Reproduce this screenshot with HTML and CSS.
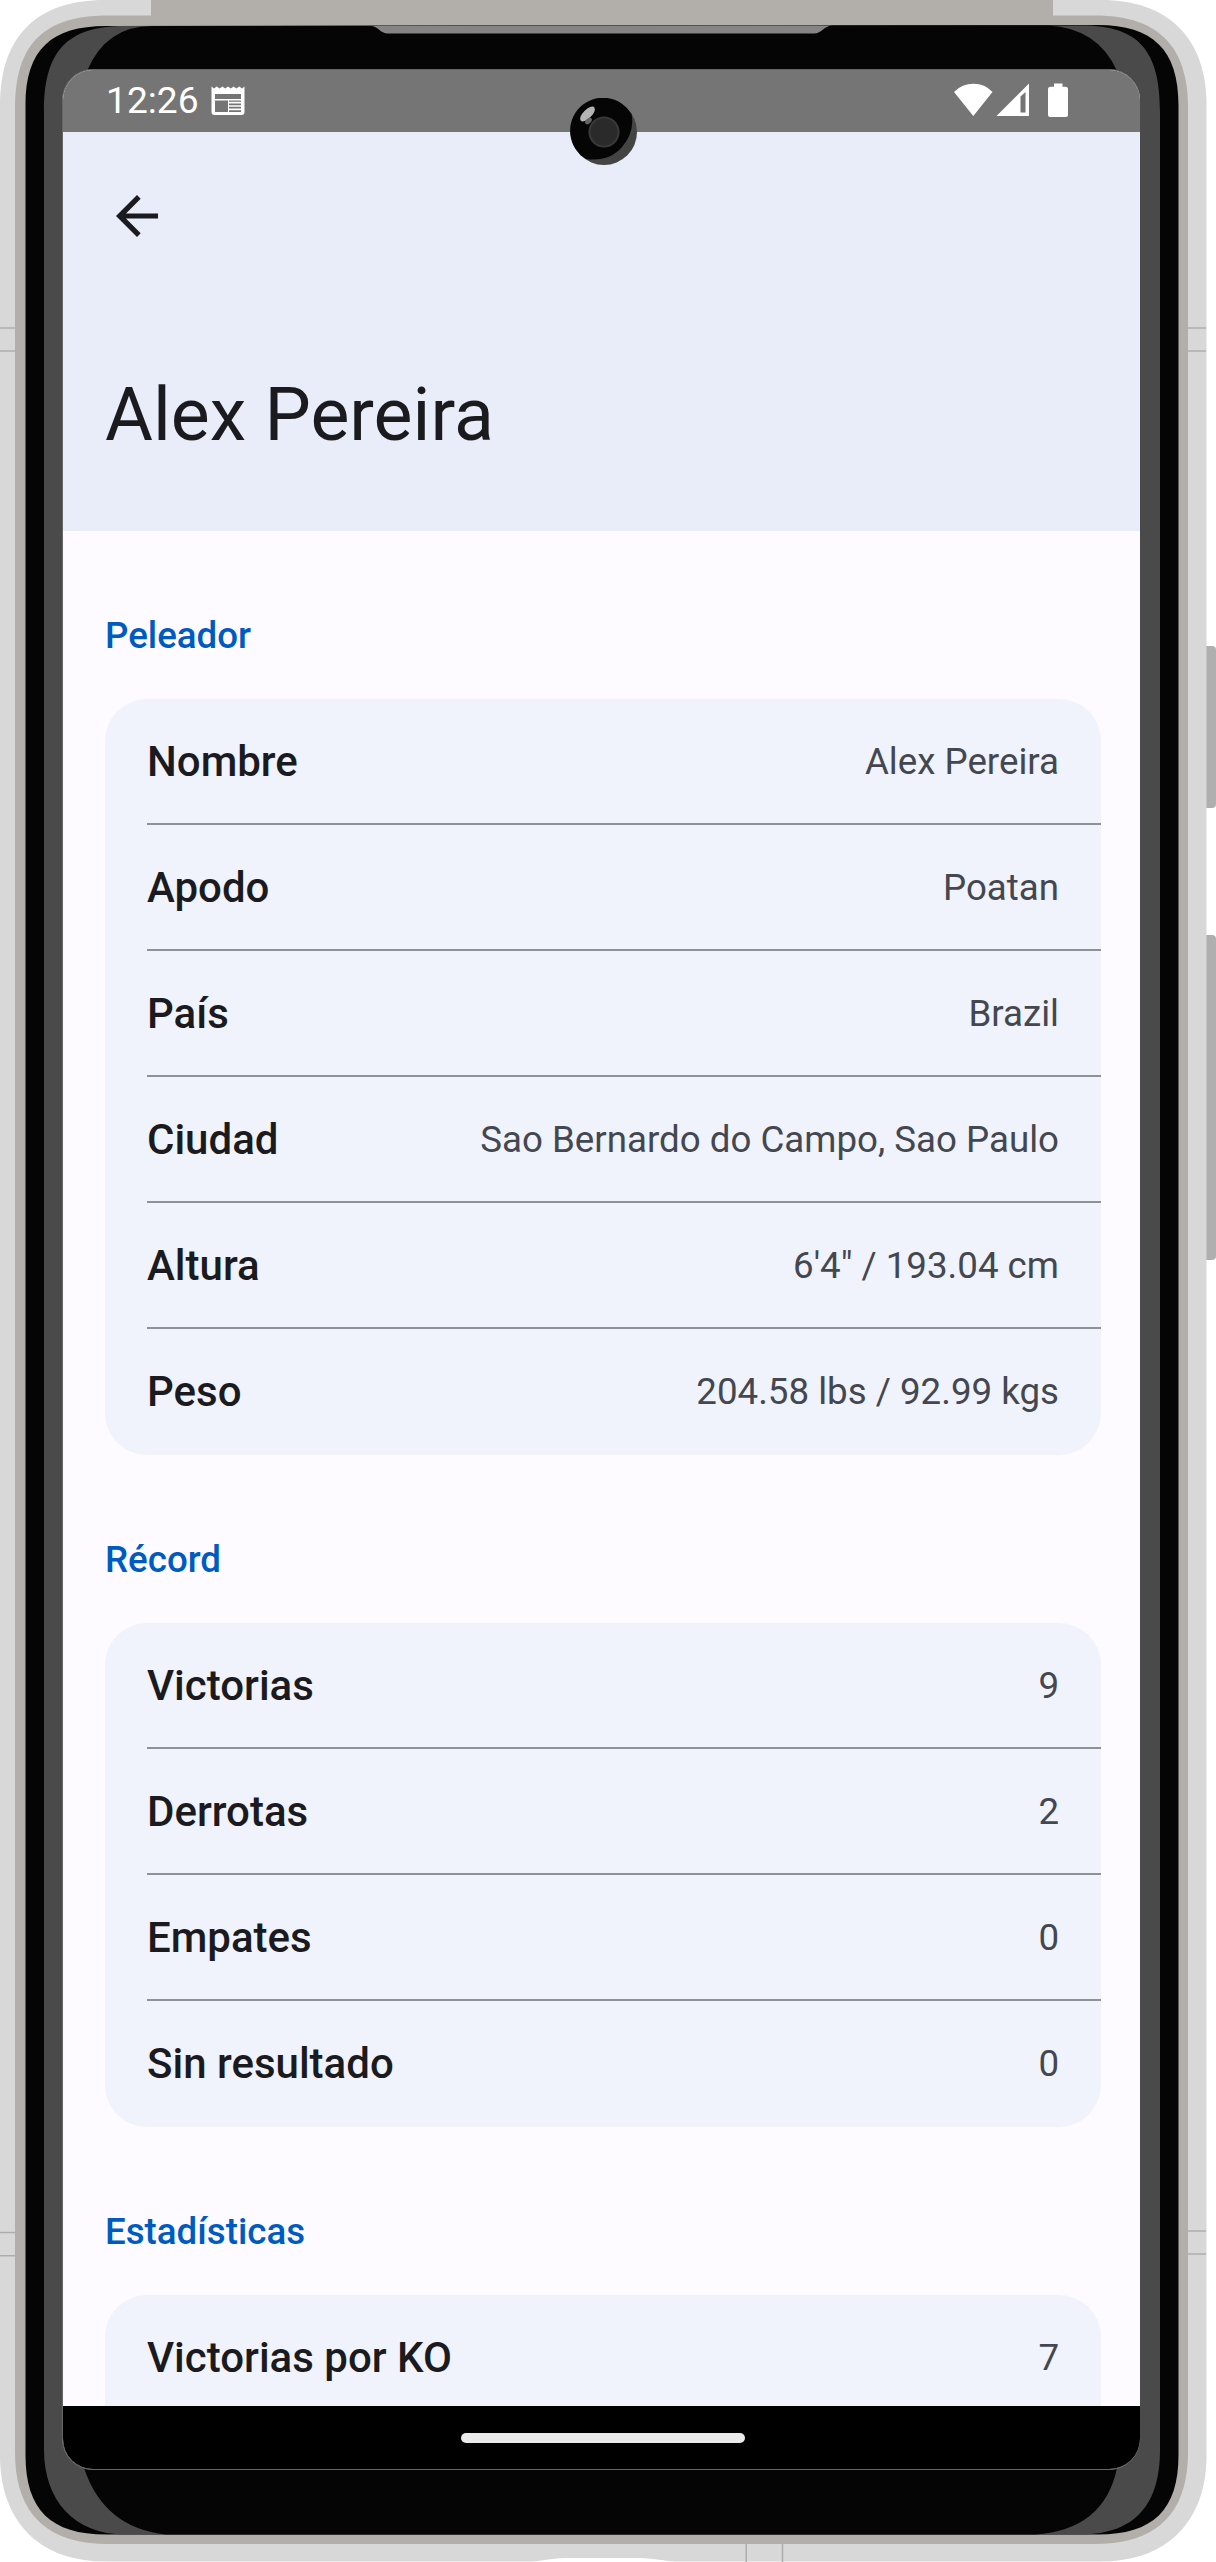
FILE: index.html
```html
<!DOCTYPE html>
<html lang="es">
<head>
<meta charset="utf-8">
<title>Alex Pereira</title>
<link rel="stylesheet" href="styles.css">
</head>
<body>
<div class="device">
  <svg class="frame" width="1216" height="2562" viewBox="0 0 1216 2562" aria-hidden="true">
    <path fill="#afafaf" d="M1200 646h12q4 0 4 4v154q0 4-4 4h-12zM1200 935h12q4 0 4 4v317q0 4-4 4h-12z"/>
    <path fill="#d8d8d8" d="M0 105C0 35 38 0 105 0H1101C1168 0 1206.500 38 1206.500 105V2456C1206.500 2520 1168 2561.500 1101 2561.500H105C38 2561.500 0 2520 0 2456Z"/>
    <path fill="#b2afaa" d="M151 0H1053V25H151Z"/>
    <path fill="#b2afaa" d="M15 108C15 48 40 15.500 108 15.500H1095C1160 15.500 1188 48 1188 108V2452C1188 2515 1155 2544 1095 2544H108C48 2544 15 2515 15 2452Z"/>
    <path fill="#050505" d="M25.500 105C25.500 50 51 26 106 26L1098 25C1153 25 1178.500 50 1178.500 105V2455C1178.500 2510 1153 2534.500 1098 2534.500H106C51 2534.500 25.500 2510 25.500 2455Z"/>
    <path fill="#4a4a4a" d="M44 112C44 52 66 26 125 26L1082 25.500C1140 25.500 1160 52 1160 112V2450C1160 2510 1130 2534.500 1080 2534.500H125C74 2534.500 44 2500 44 2450Z"/>
    <path fill="#050505" d="M87 71Q106 26 152 26L1048 25.500Q1098 28 1117 71V2468Q1104 2530 1035 2534.500H166Q104 2528 84 2468Z"/>
    <path fill="#858585" d="M371 26C378 26 380 33.500 388 33.500H814C822 33.500 824 25.500 833 25.500Z"/>
    <path stroke="#adadad" stroke-width="1.500" d="M0 328H16M0 351H16M1187.500 328H1206M1187.500 351H1206M0 2232.500H16M0 2255.800H16M1187.500 2231H1206M1187.500 2254H1206M746.200 2543V2562M782.500 2543V2562"/>
    <path fill="#fff" d="M532 2562Q555 2558 566 2558H638Q650 2558 675 2562Z"/>
  </svg>

  <div class="screen">
    <div class="status">
      <span class="clock">12:26</span>
      <svg class="news" width="34" height="30" viewBox="0 0 34 30">
        <path fill="#fff" fill-rule="evenodd" d="M.5.500l2.400 2 2.900-2 2.800 2 2.800-2 2.800 2 2.800-2 2.800 2 2.800-2 2.800 2 2.800-2 2.900 2 2.400-2V26q0 3-3 3H3.500q-3 0-3-3ZM4 8v5h26V8ZM4 14.500V26h13V14.500ZM18 14.500v1.300h12v-1.300ZM18 17.500v1.700h12v-1.700ZM18 20.800v1.700h12v-1.700ZM18 24.200v1.700h12v-1.700Z"/>
      </svg>
      <svg class="signals" width="115" height="35" viewBox="0 0 115 35">
        <path fill="#fff" d="M1 9Q9 .800 20.500 .800T39.500 9L20.300 33ZM43.500 33L76 .500V33Z"/>
        <path fill="#757575" d="M67.500 13.500l5-4.500V29.500h-5Z"/>
        <path fill="#fff" d="M101 .500h8.500v3.200h3q2.500 0 2.500 2.500V32q0 2-2 2H97q-2 0-2-2V6.200q0-2.500 2.500-2.500H101Z"/>
      </svg>
    </div>

    <header class="app-bar">
      <svg class="back" width="42" height="42" viewBox="0 0 42 42">
        <path fill="#1b1b1f" d="M42 18.400H10L24.700 3.700 21 0 0 21l21 21 3.700-3.700L10 23.600H42Z"/>
      </svg>
      <h1 class="title">Alex Pereira</h1>
    </header>

    <main class="content">
      <section>
        <h2 class="heading">Peleador</h2>
        <dl class="card">
          <div class="row"><dt>Nombre</dt><dd>Alex Pereira</dd></div>
          <div class="row"><dt>Apodo</dt><dd>Poatan</dd></div>
          <div class="row"><dt>País</dt><dd>Brazil</dd></div>
          <div class="row"><dt>Ciudad</dt><dd>Sao Bernardo do Campo, Sao Paulo</dd></div>
          <div class="row"><dt>Altura</dt><dd>6'4" / 193.04 cm</dd></div>
          <div class="row"><dt>Peso</dt><dd>204.58 lbs / 92.99 kgs</dd></div>
        </dl>
      </section>
      <section>
        <h2 class="heading">Récord</h2>
        <dl class="card">
          <div class="row"><dt>Victorias</dt><dd>9</dd></div>
          <div class="row"><dt>Derrotas</dt><dd>2</dd></div>
          <div class="row"><dt>Empates</dt><dd>0</dd></div>
          <div class="row"><dt>Sin resultado</dt><dd>0</dd></div>
        </dl>
      </section>
      <section>
        <h2 class="heading">Estadísticas</h2>
        <dl class="card card-open">
          <div class="row"><dt>Victorias por KO</dt><dd>7</dd></div>
        </dl>
      </section>
    </main>

    <div class="nav"><span class="handle"></span></div>
  </div>

  <svg class="camera" width="68" height="68" viewBox="0 0 68 68" aria-hidden="true">
    <circle cx="34" cy="34" r="33" fill="#444"/>
    <path fill="#050505" d="M61.500 16A33 33 0 1 0 16 61Q39 64 52 49T61.500 16Z"/>
    <circle cx="34" cy="34" r="14.500" fill="#2a2a2a" stroke="#383838" stroke-width="2.200"/>
    <ellipse cx="17.500" cy="16" rx="9.500" ry="4.300" fill="#b4b4b4" transform="rotate(-45 17.500 16)"/>
    <ellipse cx="18.500" cy="23" rx="4" ry="2.500" fill="#666" transform="rotate(-45 18.500 23)"/>
  </svg>
</div>
</body>
</html>
```
FILE: styles.css
```css
* {
  box-sizing: border-box;
  margin: 0;
  padding: 0;
}

body {
  background: #fff;
  font-family: Roboto, sans-serif;
  color: #1b1b1f;
}

.device {
  position: relative;
  width: 1216px;
  height: 2562px;
  padding: 69px 0 0 62px;
  overflow: hidden;
}

.frame {
  position: absolute;
  top: 0;
  left: 0;
}

.screen {
  position: relative;
  display: flex;
  flex-direction: column;
  width: 1078px;
  height: 2401px;
  border: solid #666;
  border-width: 1px 0 1px 1px;
  border-radius: 31px;
  overflow: hidden;
  background: #fdfbff;
}

.status {
  flex: none;
  display: flex;
  align-items: flex-start;
  height: 62px;
  padding: 0 72px 0 43px;
  background: #757575;
}

.clock {
  color: #fff;
  font-size: 37.200px;
  line-height: 61px;
}

.news {
  margin: 16px 0 0 12.500px;
}

.signals {
  margin: 13px 0 0 auto;
}

.app-bar {
  flex: none;
  height: 399px;
  padding: 63px 42px 0;
  background: #e9edf9;
}

.back {
  display: block;
  margin-left: 11px;
}

.title {
  margin-top: 128px;
  font-size: 73.500px;
  font-weight: 400;
  line-height: 100px;
}

.content {
  flex: 1;
  min-height: 0;
  padding: 0 39px 0 42px;
  overflow: hidden;
}

.heading {
  height: 168px;
  padding-top: 79px;
  color: #005bc0;
  font-size: 36.700px;
  font-weight: 500;
  line-height: 52px;
}

.card {
  border-radius: 42px;
  overflow: hidden;
  background: #f0f3fc;
}

/* The list carries on under the navigation bar */
.card-open {
  border-radius: 42px 42px 0 0;
}

.row {
  display: flex;
  align-items: center;
  justify-content: space-between;
  height: 126px;
  margin-left: 42px;
  padding-right: 42px;
  border-bottom: 2px solid #909197;
}

.row:last-child {
  border-bottom-color: transparent;
}

.row dt {
  font-size: 42px;
  font-weight: 500;
}

.row dd {
  color: #44474f;
  font-size: 36.700px;
}

.nav {
  flex: none;
  display: flex;
  align-items: center;
  justify-content: center;
  height: 63px;
  padding-left: 3px;
  background: #000;
}

.handle {
  width: 284px;
  height: 10px;
  border-radius: 5px;
  background: #ebebeb;
}

.camera {
  position: absolute;
  top: 98px;
  left: 570px;
}
```
